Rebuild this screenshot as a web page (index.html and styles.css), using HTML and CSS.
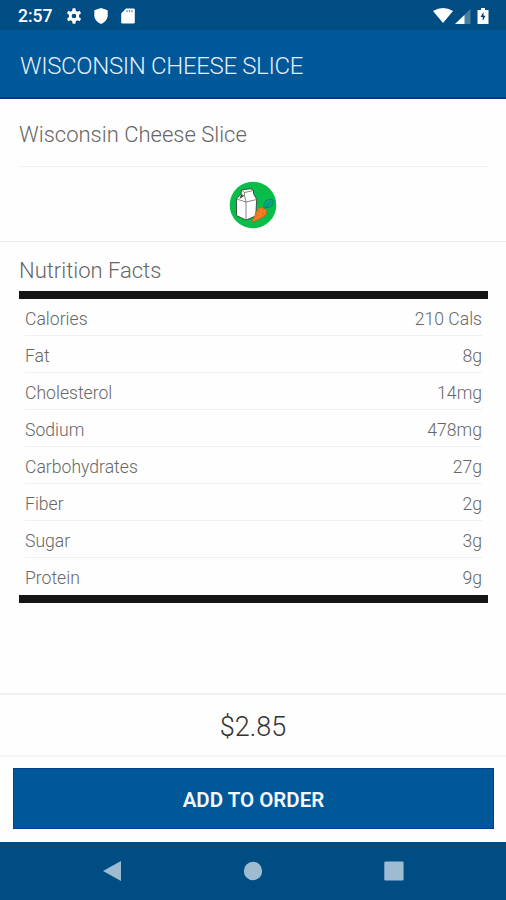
FILE: index.html
```html
<!DOCTYPE html>
<html lang="en">
<head>
    <meta charset="utf-8">
    <meta name="viewport" content="width=device-width, initial-scale=1.0">
    <title>Wisconsin Cheese Slice</title>
    <link rel="stylesheet" href="styles.css">
</head>
<body>

    <div class="status">
        <span class="time">2:57</span>
        <svg class="gear" width="16" height="16" viewBox="0 0 24 24"><path fill="#fff" fill-rule="evenodd" d="M9.2 4.3 10 .5h4l.8 3.800 2 1.200 3.800-1.300 2 3.600-3 2.500v3.400l3 2.500-2 3.600-3.800-1.300-2 1.200L14 23.500h-4l-.8-3.800-2-1.200-3.800 1.300-2-3.600 3-2.500v-3.400l-3-2.500 2-3.600 3.800 1.300zM12 8.500a3.500 3.500 0 1 0 0 7 3.500 3.500 0 0 0 0-7z"/></svg>
        <svg class="shield" width="14" height="16" viewBox="0 0 14 16"><path fill="#fff" d="M7 0l6.700 2.300v5c0 4-2.700 7.200-6.700 8.700C3 14.500.3 11.300.3 7.300v-5z"/></svg>
        <svg class="card" width="14" height="16" viewBox="0 0 14 16"><path fill="#fff" d="M5 .5h7.500q1.300 0 1.300 1.300v12.400q0 1.300-1.300 1.300h-11q-1.300 0-1.300-1.300V5.500z"/><path stroke="#6f9abb" stroke-width="1.300" d="M6 2v2.200M8.500 2v2.200M11 2v2.200"/></svg>
        <svg class="signal" width="58" height="18" viewBox="0 0 58 18">
            <path fill="#fff" d="M0 4Q10 -1.800 20 4L10 16z"/>
            <path fill="#467f9f" d="M37.500 2v15H22z"/>
            <path fill="#fff" d="M31.500 8v9H22z"/>
            <path fill="#fff" d="M48 1h4v2h3.500v14h-11V3H48z"/>
            <path fill="#003f70" d="M50.500 5 47.500 10h2.200v4l2.800-5.200h-2z"/>
        </svg>
    </div>

    <header class="title">WISCONSIN CHEESE SLICE</header>

    <div class="name"><span>Wisconsin Cheese Slice</span></div>

    <div class="badge">
        <svg width="48" height="48" viewBox="0 0 48 48">
            <circle cx="24" cy="24" r="23.300" fill="#08bd49"/>
            <path fill="#fff" stroke="#333" stroke-width=".8" stroke-linejoin="round" d="M12.500 8.800 22 7.800l2.500 1.700v3.200l3.200 5.800-1 16.500-9.700 4-9.500-4.500V18l4.600-5z"/>
            <path fill="none" stroke="#555" stroke-width=".7" d="M7.500 18 17 21l10.700-2.500M17 21v18M12.500 9l3 2.500 9-2M15.500 11.500v3L17 21M12 13l3.500 2"/>
            <path fill="#444" d="M12 13.500 10.500 18l4.500-3z"/>
            <path fill="#f47c20" stroke="#b65314" stroke-width=".5" d="M37.500 29.500c.8 4-2.600 6.300-6.500 8.200-3.200 1.600-6 3.200-8 3.300-.7-.7 1.200-2.300 2-4.500 1.700-4.700 3.600-9.800 7.200-10.200 2-.2 4.800 1.500 5.300 3.200z"/>
            <path stroke="#b65314" stroke-width=".5" d="m29 29 2 2m-4 2 2 2m4-8 2 2m-2 3 2 1"/>
            <path fill="#08a77d" stroke="#087a74" stroke-width=".8" d="M35.500 28c-2-5 1-9.500 5.500-9.700 3.500-.2 4 2 2.800 5-1 2.500-3.300 3.200-7.300 3.700l5-6"/>
        </svg>
    </div>

    <main class="facts">
        <h2>Nutrition Facts</h2>
        <table>
            <tr><td>Calories</td><td>210 Cals</td></tr>
            <tr><td>Fat</td><td>8g</td></tr>
            <tr><td>Cholesterol</td><td>14mg</td></tr>
            <tr><td>Sodium</td><td>478mg</td></tr>
            <tr><td>Carbohydrates</td><td>27g</td></tr>
            <tr><td>Fiber</td><td>2g</td></tr>
            <tr><td>Sugar</td><td>3g</td></tr>
            <tr><td>Protein</td><td>9g</td></tr>
        </table>
    </main>

    <div class="price">$2.85</div>

    <div class="order">
        <button>ADD TO ORDER</button>
    </div>

    <nav class="nav">
        <svg width="20" height="22" viewBox="0 0 20 22"><path fill="#9dbbd1" d="M19 1v20L1 11z"/></svg>
        <svg width="20" height="20" viewBox="0 0 20 20"><circle cx="10" cy="10" r="9.200" fill="#9dbbd1"/></svg>
        <svg width="20" height="20" viewBox="0 0 20 20"><rect x=".3" y=".5" width="19.300" height="19" rx="1.300" fill="#9dbbd1"/></svg>
    </nav>

</body>
</html>
```
FILE: styles.css
```css
* {
    box-sizing: border-box;
}

body {
    margin: 0;
    height: 900px;
    display: flex;
    flex-direction: column;
    overflow: hidden;
    background: #fefefe;
    color: #666;
    font-family: Roboto, sans-serif;
    font-weight: 300;
}

.status {
    height: 30px;
    padding: 1px 15px 0 18px;
    display: flex;
    align-items: center;
    background: #004d84;
}

.time {
    width: 48px;
    color: #fff;
    font-size: 17.5px;
    font-weight: 500;
}

.shield {
    margin-left: 12px;
}

.card {
    margin-left: 13px;
}

.signal {
    margin-left: auto;
}

.title {
    height: 69px;
    padding-left: 20px;
    border-bottom: 2px solid #003886;
    background: #005898;
    color: #e6edfa;
    font-size: 24px;
    letter-spacing: -0.35px;
    line-height: 73px;
}

.name {
    height: 68px;
    margin: 0 18px 0 19px;
    border-bottom: 1px solid #f0f0f0;
    font-size: 22px;
    line-height: 71px;
}

.badge {
    height: 75px;
    padding-top: 1px;
    display: flex;
    justify-content: center;
    align-items: center;
    border-bottom: 1px solid #ebebeb;
}

.facts {
    flex: 1;
    padding: 15px 18px 0 19px;
}

.facts h2 {
    margin: 0;
    height: 34px;
    font-size: 22px;
    font-weight: 300;
    line-height: 28px;
}

table {
    width: 100%;
    padding: 0 6px;
    border-top: 8px solid #151515;
    border-bottom: 8px solid #151515;
    border-spacing: 0;
}

td {
    height: 37px;
    padding: 3px 0 0;
    border-bottom: 1px solid #f0f0f0;
    font-size: 17.6px;
}

td:last-child {
    text-align: right;
}

tr:last-child td {
    padding-top: 2px;
    border-bottom: 0;
}

.price {
    height: 64px;
    border-top: 2px solid #f1f1f1;
    border-bottom: 2px solid #f5f5f5;
    color: #333;
    font-size: 27px;
    line-height: 64px;
    text-align: center;
}

.order {
    height: 85px;
    padding: 11px 12px 0 13px;
}

.order button {
    display: block;
    width: 100%;
    height: 61px;
    padding-top: 3px;
    border: 1px solid #003f8d;
    background: #005898;
    color: #f5f8ff;
    font: 600 20.5px Roboto, sans-serif;
}

.nav {
    height: 58px;
    padding: 0 102px;
    display: flex;
    justify-content: space-between;
    align-items: center;
    background: #004d84;
}
```
